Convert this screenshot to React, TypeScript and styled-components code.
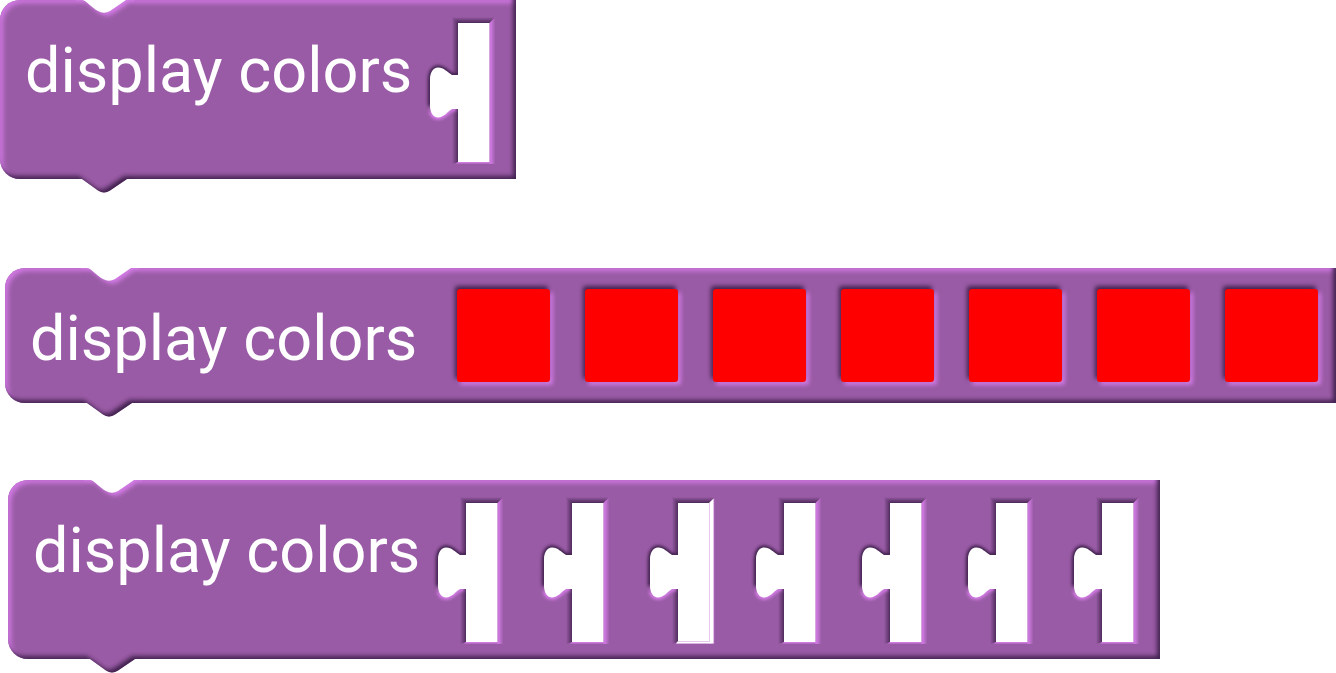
import React from 'react';
import styled, { createGlobalStyle } from 'styled-components';

const BASE = '#995ba5';
const LIGHT = '#d27ae4';
const DARK = '#432350';

const GlobalStyle = createGlobalStyle`
  body {
    margin: 0;
    background: #ffffff;
    font-family: Roboto, sans-serif;
  }
`;

const Workspace = styled.main`
  display: flex;
  flex-direction: column;
  align-items: flex-start;
  padding-bottom: 14px;
`;

const Block = styled.section<{ $indent?: number; $above?: number; $stretch?: boolean }>`
  position: relative;
  display: flex;
  align-items: flex-start;
  box-sizing: border-box;
  align-self: ${(p) => (p.$stretch ? 'stretch' : 'flex-start')};
  margin-left: ${(p) => p.$indent ?? 0}px;
  margin-top: ${(p) => p.$above ?? 0}px;
  padding: 0 18px 0 25px;
  border-radius: 20px 0 0 20px;
  background: ${BASE};
  box-shadow:
    inset -3px -3px 4px ${DARK},
    inset 3px 3px 5px ${LIGHT};
`;

const Label = styled.span`
  padding-top: 33px;
  color: #ffffff;
  font-size: 63px;
  line-height: 76px;
  white-space: nowrap;
`;

const Slots = styled.div`
  display: flex;
  gap: 32px;
  margin-left: 12px;
  padding: 16px 0 11px;
`;

const Swatches = styled.div`
  display: flex;
  gap: 35px;
  margin-left: auto;
  padding: 21px 0;
`;

const Swatch = styled.button`
  width: 93px;
  height: 93px;
  padding: 0;
  border: 0;
  border-radius: 3px;
  background: #ff0000;
  box-shadow:
    -2px -3px 4px ${DARK},
    3px 3px 4px ${LIGHT};
`;

const NotchArt = styled.svg`
  position: absolute;
  top: 0;
  left: 76px;
`;

const TabArt = styled.svg`
  position: absolute;
  bottom: -14px;
  left: 76px;
`;

const SlotArt = styled.svg`
  display: block;
`;

const SharedDefs = styled.svg`
  position: absolute;
`;

const NOTCH = 'M-40 -40V0H6C10 0 16 8 22 11Q28 14.5 34 11L50 0H100V-40Z';
const TAB = 'M-40 -40V10H6L22 21.5Q28 25.5 34 21.5L51 10H100V-40Z';
const KNOB =
  'M36 59H28C23 56 20 51.5 14 51.5C9 51.5 6 57 6 63V90C6 96 9 101.5 14 101.5C20 101.5 23 96 28 93H36Z';

function Defs() {
  return (
    <SharedDefs width="0" height="0" aria-hidden="true">
      <defs>
        <filter id="edge" x="-50%" y="-50%" width="200%" height="200%">
          <feGaussianBlur stdDeviation="2" />
        </filter>
        <filter id="knobEdge" x="-50%" y="-50%" width="200%" height="200%">
          <feGaussianBlur stdDeviation="1.4" />
        </filter>
        <clipPath id="tabShape">
          <path d={TAB} />
        </clipPath>
        <linearGradient id="bevelLeft">
          <stop offset="0" stopColor={DARK} stopOpacity="0" />
          <stop offset="1" stopColor={DARK} stopOpacity="0.85" />
        </linearGradient>
        <linearGradient id="bevelTop" x2="0" y2="1">
          <stop offset="0" stopColor={DARK} stopOpacity="0" />
          <stop offset="1" stopColor={DARK} stopOpacity="0.9" />
        </linearGradient>
        <linearGradient id="bevelRight">
          <stop offset="0" stopColor={LIGHT} />
          <stop offset="0.35" stopColor={LIGHT} stopOpacity="0.8" />
          <stop offset="1" stopColor={LIGHT} stopOpacity="0" />
        </linearGradient>
      </defs>
    </SharedDefs>
  );
}

function Connectors() {
  return (
    <>
      <NotchArt width="58" height="26" viewBox="0 0 58 26" aria-hidden="true">
        <rect width="58" height="26" fill={BASE} />
        <path d={NOTCH} transform="translate(3 3)" fill={LIGHT} filter="url(#edge)" />
        <path d={NOTCH} fill="#ffffff" />
      </NotchArt>
      <TabArt width="58" height="24" viewBox="0 0 58 24" aria-hidden="true">
        <g clipPath="url(#tabShape)">
          <rect width="58" height="24" fill={BASE} />
          <path
            d="M-40 60V10H6L22 21.5Q28 25.5 34 21.5L51 10H100V60Z"
            transform="translate(-3 -3)"
            fill={DARK}
            filter="url(#edge)"
          />
        </g>
      </TabArt>
    </>
  );
}

function Slot({ whiteEdge = false }: { whiteEdge?: boolean }) {
  return (
    <SlotArt width="74" height="152" viewBox="0 0 74 152" aria-hidden="true">
      <path d="M28 1L34 7V146L28 148Z" fill="url(#bevelLeft)" />
      <path d="M28 1H71L65.5 7H34Z" fill="url(#bevelTop)" />
      <path
        d="M34 59H28C23 56 20 51.5 14 51.5C9 51.5 6 57 6 63V90"
        fill="none"
        stroke={DARK}
        strokeWidth="4.5"
        filter="url(#knobEdge)"
      />
      <path
        d="M7 95C8 99 10 101.5 14 101.5C20 101.5 23 96 28 93H32"
        fill="none"
        stroke={LIGHT}
        strokeWidth="5"
        filter="url(#knobEdge)"
      />
      <path d="M65.5 7L71.5 1V148H65.5Z" fill="url(#bevelRight)" />
      <path d="M34 146H66V147.6H32Z" fill={LIGHT} />
      <path d={KNOB} fill="#ffffff" />
      <rect x="34" y="7" width="31.4" height="139" fill="#ffffff" />
      {whiteEdge && (
        <>
          <path d="M65 7L69.6 2.5V147.6H32L34 145H65Z" fill="#ffffff" />
          <path d="M34 145.5H65.5V7" fill="none" stroke="#dbb4e3" strokeWidth="0.7" />
        </>
      )}
    </SlotArt>
  );
}

export default function App() {
  return (
    <>
      <GlobalStyle />
      <Defs />
      <Workspace>
        <Block>
          <Connectors />
          <Label>display colors</Label>
          <Slots>
            <Slot />
          </Slots>
        </Block>
        <Block $indent={5} $above={89} $stretch>
          <Connectors />
          <Label>display colors</Label>
          <Swatches>
            {Array.from({ length: 7 }, (_, i) => (
              <Swatch key={i} type="button" aria-label={`Color ${i + 1}: red`} />
            ))}
          </Swatches>
        </Block>
        <Block $indent={8} $above={77}>
          <Connectors />
          <Label>display colors</Label>
          <Slots>
            {Array.from({ length: 7 }, (_, i) => (
              <Slot key={i} whiteEdge={i === 2} />
            ))}
          </Slots>
        </Block>
      </Workspace>
    </>
  );
}
